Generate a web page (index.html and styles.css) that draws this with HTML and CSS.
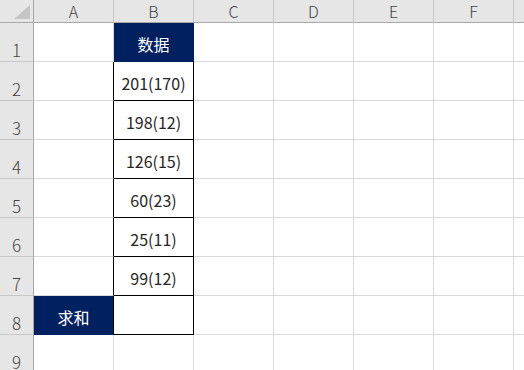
FILE: index.html
```html
<!DOCTYPE html>
<html lang="zh">
<head>
<meta charset="utf-8">
<title>Sheet</title>
<link rel="stylesheet" href="styles.css">
</head>
<body>
<div class="sheet">
  <div class="hd corner"><svg class="tri" width="16" height="14" viewBox="0 0 16 14"><polygon points="16,0 16,14 0,14" fill="#c4c4c4"/></svg></div>
  <div class="hd col">A</div>
  <div class="hd col">B</div>
  <div class="hd col">C</div>
  <div class="hd col">D</div>
  <div class="hd col">E</div>
  <div class="hd col">F</div>
  <div class="hd col last"></div>

  <div class="hd row">1</div>
  <div class="c"></div><div class="c navy">数据</div><div class="c"></div><div class="c"></div><div class="c"></div><div class="c"></div><div class="c"></div>

  <div class="hd row">2</div>
  <div class="c edge"></div><div class="c box">201(170)</div><div class="c"></div><div class="c"></div><div class="c"></div><div class="c"></div><div class="c"></div>

  <div class="hd row">3</div>
  <div class="c edge"></div><div class="c box">198(12)</div><div class="c"></div><div class="c"></div><div class="c"></div><div class="c"></div><div class="c"></div>

  <div class="hd row">4</div>
  <div class="c edge"></div><div class="c box">126(15)</div><div class="c"></div><div class="c"></div><div class="c"></div><div class="c"></div><div class="c"></div>

  <div class="hd row">5</div>
  <div class="c edge"></div><div class="c box">60(23)</div><div class="c"></div><div class="c"></div><div class="c"></div><div class="c"></div><div class="c"></div>

  <div class="hd row">6</div>
  <div class="c edge"></div><div class="c box">25(11)</div><div class="c"></div><div class="c"></div><div class="c"></div><div class="c"></div><div class="c"></div>

  <div class="hd row">7</div>
  <div class="c edge"></div><div class="c box">99(12)</div><div class="c"></div><div class="c"></div><div class="c"></div><div class="c"></div><div class="c"></div>

  <div class="hd row">8</div>
  <div class="c navy edge nb">求和</div><div class="c box"></div><div class="c"></div><div class="c"></div><div class="c"></div><div class="c"></div><div class="c"></div>

  <div class="hd row">9</div>
  <div class="c"></div><div class="c"></div><div class="c"></div><div class="c"></div><div class="c"></div><div class="c"></div><div class="c"></div>
</div>
</body>
</html>
```

FILE: styles.css
```css
html, body {
  margin: 0;
  padding: 0;
  background: #ffffff;
  overflow: hidden;
}

.sheet {
  display: grid;
  grid-template-columns: 34px repeat(7, 80px);
  grid-template-rows: 23px repeat(9, 39px);
  font-family: "Noto Sans CJK SC", "Noto Sans", sans-serif;
  color: #262626;
}

.sheet > div {
  box-sizing: border-box;
  border-right: 1px solid #d9d9d9;
  border-bottom: 1px solid #d9d9d9;
}

.hd {
  background: #e6e6e6;
  color: #444444;
  font-weight: 300;
}

.hd.col {
  display: flex;
  align-items: center;
  justify-content: center;
  font-size: 16px;
  border-right-color: #c8c8c8;
  border-bottom-color: #a8a8a8;
  line-height: 1;
}

.hd.corner {
  position: relative;
  border-right-color: #a8a8a8;
  border-bottom-color: #a8a8a8;
}

.tri {
  position: absolute;
  right: 3px;
  bottom: 3px;
}

.hd.row {
  display: flex;
  align-items: flex-end;
  justify-content: center;
  font-size: 17px;
  padding-bottom: 1px;
  border-right-color: #a8a8a8;
  border-bottom-color: #c8c8c8;
  line-height: 1.2;
}

.c {
  display: flex;
  align-items: center;
  justify-content: center;
  padding-top: 4px;
  font-size: 16px;
  font-weight: 400;
  line-height: 1;
}

.navy {
  background: #002060;
  color: #ffffff;
  border-right-color: #002060 !important;
  border-bottom-color: #002060 !important;
}

.sheet > .edge {
  border-right-color: #000000;
}

.sheet > .nb {
  border-right-color: #000000 !important;
}

.sheet > .box {
  border-right-color: #000000;
  border-bottom-color: #000000;
}
```
